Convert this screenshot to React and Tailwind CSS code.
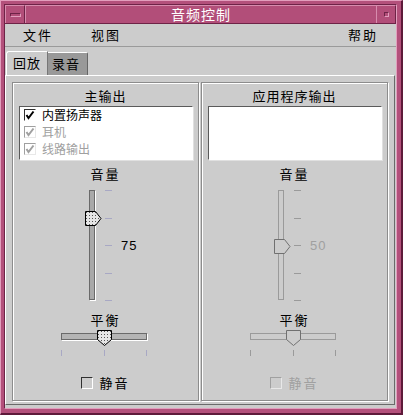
import React from "react";

const F = "font-['Noto_Sans_CJK_SC','Noto_Sans_CJK_JP',sans-serif]";

function Check({ checked, disabled }) {
  const c = disabled ? "#a0a0a0" : "#000";
  return (
    <div
      className={
        "w-[12px] h-[12px] shrink-0 border " +
        (disabled
          ? "border-t-[#a0a0a0] border-l-[#a0a0a0] border-b-[#e8e8e8] border-r-[#e8e8e8]"
          : "border-t-[#303030] border-l-[#303030] border-b-[#ffffff] border-r-[#ffffff]")
      }
    >
      {checked && (
        <svg width="10" height="10" viewBox="0 0 10 10" className="block">
          <polyline points="1.5,5 3.5,8 8.5,1.5" fill="none" stroke={c} strokeWidth="2" />
        </svg>
      )}
    </div>
  );
}

function VThumb({ disabled }) {
  return (
    <svg width="17" height="16" viewBox="0 0 17 16" className="block">
      <defs>
        <pattern id="dots" width="3" height="3" patternUnits="userSpaceOnUse">
          <rect width="3" height="3" fill="#e6e6e6" />
          <rect x="1" y="1" width="1" height="1" fill="#555" />
        </pattern>
      </defs>
      <polygon
        points="0.5,0.5 10.5,0.5 16,7.5 10.5,14.5 0.5,14.5"
        fill={disabled ? "#cccccc" : "url(#dots)"}
        stroke={disabled ? "#707070" : "#000"}
        strokeWidth="1"
      />
    </svg>
  );
}

function HThumb({ disabled }) {
  return (
    <svg width="16" height="16" viewBox="0 0 16 16" className="block">
      <defs>
        <pattern id="dots2" width="3" height="3" patternUnits="userSpaceOnUse">
          <rect width="3" height="3" fill="#e6e6e6" />
          <rect x="1" y="1" width="1" height="1" fill="#555" />
        </pattern>
      </defs>
      <polygon
        points="0.5,0.5 14.5,0.5 14.5,9.5 7.5,15.5 0.5,9.5"
        fill={disabled ? "#cccccc" : "url(#dots2)"}
        stroke={disabled ? "#707070" : "#000"}
        strokeWidth="1"
      />
    </svg>
  );
}

function Group({ title, disabled, items, value, thumbTop }) {
  const tick = disabled ? "bg-[#9a9a9a]" : "bg-[#a8a8c4]";
  return (
    <div className="w-[187px] h-[319px] border border-[#8c8c8c] shadow-[inset_1px_1px_0_#ffffff,1px_1px_0_#ffffff] flex flex-col">
      <div className={"mt-[5px] h-[16px] leading-[16px] text-center text-[13px] tracking-[1px] text-black " + F}>{title}</div>
      <div className="mt-[2px] ml-[6px] w-[174px] h-[54px] bg-white border border-t-[#5a5a5a] border-l-[#5a5a5a] border-b-[#ffffff] border-r-[#ffffff] shadow-[1px_1px_0_#e0e0e0] pt-[2px] pl-[4px] flex flex-col gap-[5px]">
        {items.map((it, i) => (
          <div key={i} className="flex items-center h-[12px] gap-[6px]">
            <Check checked disabled={i > 0} />
            <span className={"text-[12px] leading-[12px] " + F + (i > 0 ? " text-[#a0a0a0]" : " text-black")}>{it}</span>
          </div>
        ))}
      </div>
      <div className={"mt-[6px] h-[16px] leading-[16px] text-center text-[13px] tracking-[2px] text-black " + F}>音量</div>
      <div className="mt-[8px] h-[111px] flex">
        <div className="ml-[76px] relative w-[7px] h-[111px]">
          <div
            className={
              "w-[6px] h-[110px] border " +
              (disabled
                ? "border-[#9a9a9a] bg-[#cccccc]"
                : "border-[#6a6a6a] bg-[#a9a9a9] shadow-[1px_1px_0_#ffffff]")
            }
          />
          <div className="absolute left-[-4px]" style={{ top: thumbTop }}>
            <VThumb disabled={disabled} />
          </div>
        </div>
        <div className="ml-[9px] w-[7px] h-[111px] flex flex-col justify-between">
          {[0, 1, 2, 3, 4].map((i) => (
            <div key={i} className={"h-[1px] w-[7px] " + tick} />
          ))}
        </div>
        <div className={"ml-[9px] self-center text-[13px] tracking-[1px] font-['Liberation_Sans',sans-serif] " + (disabled ? "text-[#a0a0a0]" : "text-black")}>
          {value}
        </div>
      </div>
      <div className={"mt-[11px] h-[16px] leading-[16px] text-center text-[13px] tracking-[2px] text-black " + F}>平衡</div>
      <div className="mt-[2px] ml-[48px] w-[86px] h-[16px] relative">
        <div
          className={
            "absolute left-0 top-[3px] w-[86px] h-[7px] border " +
            (disabled
              ? "border-[#9a9a9a] bg-[#cccccc]"
              : "border-[#6a6a6a] bg-[#b4b4b4] shadow-[1px_1px_0_#ffffff]")
          }
        />
        <div className="absolute left-[36px] top-0">
          <HThumb disabled={disabled} />
        </div>
      </div>
      <div className="mt-[4px] ml-[48px] w-[86px] h-[6px] flex justify-between">
        {[0, 1, 2].map((i) => (
          <div key={i} className={"w-[1px] h-[6px] " + tick} />
        ))}
      </div>
      <div className="mt-[20px] flex items-center justify-center gap-[6px]">
        <Check disabled={disabled} />
        <span className={"text-[13px] tracking-[2px] leading-[14px] " + F + (disabled ? " text-[#a0a0a0]" : " text-black")}>静音</span>
      </div>
    </div>
  );
}

export default function App() {
  return (
    <div className="w-[403px] h-[415px] bg-[#b3507b] border-t border-l border-[#e29ebd] border-r-[#5e1a3a] border-b-[#5e1a3a] border-r-2 border-b-2 pt-[3px] pl-[3px] pr-[4px] pb-[4px]">
      <div className="w-full h-full border border-t-[#6e2347] border-l-[#6e2347] border-b-[#e29ebd] border-r-[#e29ebd] bg-[#cccccc] flex flex-col">
        {/* title bar */}
        <div className="h-[19px] shrink-0 flex bg-[#b24e79] border-b border-[#6e2347]">
          <div className="w-[20px] h-full border-t border-l border-[#d78cae] border-r border-r-[#6e2347] flex items-center justify-center">
            <div className="w-[11px] h-[4px] border border-t-[#6e2347] border-l-[#6e2347] border-b-[#e29ebd] border-r-[#e29ebd]" />
          </div>
          <div className={"flex-1 h-full border-t border-l border-[#d78cae] text-center text-white text-[14px] leading-[17px] tracking-[1px] " + F}>
            音频控制
          </div>
          <div className="w-[20px] h-full border-t border-l border-[#d78cae] border-r border-r-[#6e2347] flex items-center justify-center">
            <div className="w-[5px] h-[5px] border border-t-[#6e2347] border-l-[#6e2347] border-b-[#e29ebd] border-r-[#e29ebd]" />
          </div>
        </div>
        {/* menu bar */}
        <div className={"h-[23px] shrink-0 flex items-center text-[13px] tracking-[2px] text-black border-b border-[#9a9a9a] " + F}>
          <span className="ml-[18px]">文件</span>
          <span className="ml-[38px]">视图</span>
          <span className="ml-auto mr-[18px]">帮助</span>
        </div>
        {/* tabs */}
        <div className="mt-[4px] h-[24px] shrink-0 flex items-end pl-[1px] relative z-10">
          <div className={"w-[42px] h-[24px] bg-[#cccccc] border-t border-l border-white border-r border-r-[#777777] rounded-tl-[3px] text-[13px] tracking-[1px] leading-[22px] pl-[6px] text-black " + F}>
            回放
          </div>
          <div className={"w-[40px] h-[23px] bg-[#999999] border-t border-white border-r border-r-[#666666] rounded-tr-[2px] text-[13px] tracking-[1px] leading-[22px] pl-[4px] text-black " + F}>
            录音
          </div>
        </div>
        {/* notebook body */}
        <div className="flex-1 mr-[1px] mb-[3px] border-t border-l border-white border-r border-b border-r-[#6a6a6a] border-b-[#6a6a6a] pt-[6px] pl-[6px] flex gap-[2px]">
          <Group
            title="主输出"
            items={["内置扬声器", "耳机", "线路输出"]}
            value="75"
            thumbTop={21}
          />
          <Group title="应用程序输出" disabled items={[]} value="50" thumbTop={49} />
        </div>
      </div>
    </div>
  );
}
